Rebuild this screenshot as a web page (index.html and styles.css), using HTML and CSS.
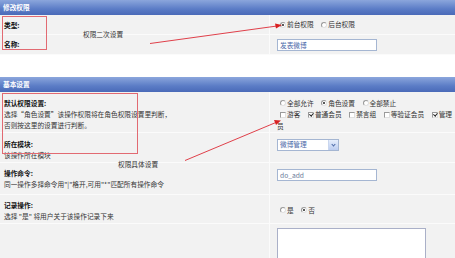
FILE: index.html
```html
<!DOCTYPE html>
<html>
<head>
    <meta charset="UTF-8">
    <title>修改权限</title>
    <link rel="stylesheet" href="styles.css">
</head>
<body>
    <div class="page">
        <div class="panel">
            <div class="panel-head">修改权限</div>
            <div class="row h-type">
                <div class="cell-label"><b>类型:</b></div>
                <div class="cell-field">
                    <span class="radio on first"></span>前台权限
                    <span class="radio gap"></span>后台权限
                </div>
            </div>
            <div class="row h-name">
                <div class="cell-label"><b>名称:</b></div>
                <div class="cell-field">
                    <div class="text-input">发表微博</div>
                </div>
            </div>
        </div>

        <div class="panel second">
            <div class="panel-head">基本设置</div>
            <div class="row h-default">
                <div class="cell-label">
                    <b>默认权限设置:</b><br>
                    选择“角色设置”该操作权限将在角色权限设置里判断，<br>
                    否则按这里的设置进行判断。
                </div>
                <div class="cell-field">
                    <span class="radio first"></span>全部允许
                    <span class="radio on gap"></span>角色设置
                    <span class="radio gap"></span>全部禁止<br>
                    <span class="check first"></span>游客
                    <span class="check on gap"></span>普通会员
                    <span class="check gap"></span>禁言组
                    <span class="check gap"></span>等验证会员
                    <span class="check on gap"></span>管理员
                </div>
            </div>
            <div class="row h-module">
                <div class="cell-label">
                    <b>所在模块:</b><br>
                    该操作所在模块
                </div>
                <div class="cell-field">
                    <div class="select-box">
                        <span>微博管理</span>
                        <span class="select-btn"></span>
                    </div>
                </div>
            </div>
            <div class="row h-cmd">
                <div class="cell-label">
                    <b>操作命令:</b><br>
                    同一操作多择命令用"|"格开,可用"*"匹配所有操作命令
                </div>
                <div class="cell-field">
                    <div class="text-input grey">do_add</div>
                </div>
            </div>
            <div class="row h-log">
                <div class="cell-label">
                    <b>记录操作:</b><br>
                    选择 "是" 将用户关于该操作记录下来
                </div>
                <div class="cell-field">
                    <span class="radio first"></span>是
                    <span class="radio on gap"></span>否
                </div>
            </div>
            <div class="row h-memo">
                <div class="cell-label"></div>
                <div class="cell-field">
                    <div class="memo"></div>
                </div>
            </div>
        </div>

        <!-- annotations drawn over the screenshot -->
        <div class="mark mark-type"></div>
        <div class="mark mark-default"></div>
        <div class="note note-one">权限二次设置</div>
        <div class="note note-two">权限具体设置</div>
        <svg class="arrows" width="455" height="258" viewBox="0 0 455 258">
            <line x1="150" y1="43.5" x2="277" y2="26" stroke="#e0404a" stroke-width="1"/>
            <polygon points="282,25 275,23.5 276,28.5" fill="#d82020"/>
            <line x1="185" y1="160.5" x2="277" y2="122" stroke="#e0404a" stroke-width="1"/>
            <polygon points="281,120.5 274,120 276,125" fill="#d82020"/>
        </svg>
    </div>
</body>
</html>
```

FILE: styles.css
```css
body {
    margin: 0;
    background-color: #ffffff;
    font-family: "Noto Sans CJK SC", "DejaVu Sans", sans-serif;
    font-size: 6.7px;
    color: #333;
}
.page {
    position: relative;
    width: 455px;
    height: 258px;
    overflow: hidden;
}
.panel-head {
    height: 15px;
    line-height: 15px;
    padding-left: 3px;
    color: #ffffff;
    font-weight: bold;
    background: linear-gradient(#8ba6dc, #5b7cc6 60%, #4a6ab8);
}
.second {
    margin-top: 22px;
}
.row {
    display: grid;
    grid-template-columns: 270px 1fr;
    background-color: #f2f2f2;
    border-bottom: 1px solid #fbfbfb;
}
.cell-label {
    padding-left: 4px;
    color: #333;
    line-height: 11px;
    border-right: 1px solid #fbfbfb;
}
.cell-label b {
    color: #111;
}
.cell-field {
    padding-left: 7px;
    line-height: 11.5px;
    color: #333;
}
.h-type { height: 19px; }
.h-type .cell-label { padding-top: 5px; }
.h-type .cell-field { padding-top: 4px; }
.h-name { height: 19px; }
.h-name .cell-label { padding-top: 4px; }
.h-name .cell-field { padding-top: 4px; }
.h-default { height: 40px; }
.h-default .cell-label { padding-top: 6px; }
.h-default .cell-field { padding-top: 5.5px; }
.h-module { height: 29px; }
.h-module .cell-label { padding-top: 6px; }
.h-module .cell-field { padding-top: 6px; }
.h-cmd { height: 31px; }
.h-cmd .cell-label { padding-top: 5px; }
.h-cmd .cell-field { padding-top: 6px; }
.h-log { height: 28px; }
.h-log .cell-label { padding-top: 5px; }
.h-log .cell-field { padding-top: 9.5px; }
.h-memo { height: 40px; }
.h-memo .cell-field { padding-top: 4px; }

.radio, .check {
    display: inline-block;
    width: 4px;
    height: 4px;
    margin-right: 1px;
    vertical-align: -0.5px;
    background-color: #ffffff;
    border: 1px solid #9a9a9a;
    border-right-color: #e0e0e0;
    border-bottom-color: #e0e0e0;
    position: relative;
}
.radio {
    border-radius: 50%;
}
.radio.on::after {
    content: "";
    position: absolute;
    left: 1px;
    top: 1px;
    width: 2px;
    height: 2px;
    border-radius: 50%;
    background-color: #222;
}
.check.on::after {
    content: "";
    position: absolute;
    left: 1px;
    top: -0.5px;
    width: 1.5px;
    height: 3px;
    border: solid #222;
    border-width: 0 1px 1px 0;
    transform: rotate(40deg);
}
.first {
    margin-left: 3px;
}
.gap {
    margin-left: 6px;
}
.text-input {
    width: 96px;
    height: 10px;
    line-height: 10px;
    padding-left: 2px;
    background-color: #ffffff;
    border: 1px solid #a5b6d2;
    color: #4a68a8;
}
.text-input.grey {
    color: #6a7a98;
}
.select-box {
    display: flex;
    justify-content: space-between;
    align-items: center;
    width: 58px;
    height: 10px;
    padding-left: 2px;
    background-color: #ffffff;
    border: 1px solid #a5b6d2;
    color: #4a68a8;
}
.select-btn {
    width: 9px;
    height: 10px;
    background: linear-gradient(#e6eefc, #bccdf0);
    border-left: 1px solid #c9d6ee;
    position: relative;
}
.select-btn::after {
    content: "";
    position: absolute;
    left: 2.5px;
    top: 3px;
    width: 2px;
    height: 2px;
    border: solid #4d6aa8;
    border-width: 0 1px 1px 0;
    transform: rotate(45deg);
}
.memo {
    width: 147px;
    height: 40px;
    background-color: #ffffff;
    border: 1px solid #aab0c8;
}

.mark {
    position: absolute;
    border: 1px solid #e26a72;
}
.mark-type {
    left: 2px;
    top: 16px;
    width: 43px;
    height: 32px;
}
.mark-default {
    left: 2px;
    top: 93px;
    width: 134px;
    height: 59px;
}
.note {
    position: absolute;
    color: #333;
    line-height: 10px;
}
.note-one {
    left: 83px;
    top: 29px;
}
.note-two {
    left: 118px;
    top: 159px;
}
.arrows {
    position: absolute;
    left: 0;
    top: 0;
}
```
